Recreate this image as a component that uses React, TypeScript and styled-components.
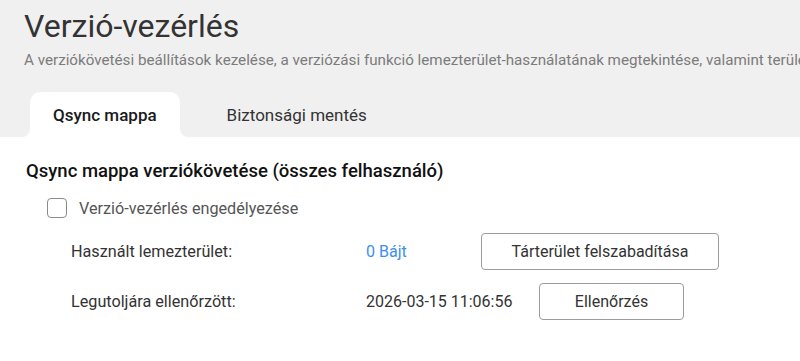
import React from "react";
import styled, { createGlobalStyle } from "styled-components";

const Global = createGlobalStyle`
  html, body { margin: 0; padding: 0; background: #ffffff; }
  body { font-family: Roboto, "Noto Sans", "Liberation Sans", sans-serif; overflow: hidden; }
  * { box-sizing: border-box; }
`;

const Page = styled.div`
  width: 800px;
  height: 361px;
  background: #ffffff;
  overflow: hidden;
`;

const Header = styled.header`
  background: #f0f0f0;
  padding: 6px 0 0 24px;
`;

const Title = styled.h1`
  margin: 0;
  font-size: 32px;
  line-height: 40px;
  font-weight: 400;
  color: #333333;
`;

const Subtitle = styled.p`
  margin: 5px 0 0 0;
  font-size: 15.2px;
  line-height: 18px;
  color: #7b7b7b;
  white-space: nowrap;
  overflow: hidden;
`;

const TabBar = styled.nav`
  display: flex;
  gap: 24px;
  margin-top: 23px;
  padding-left: 6px;
`;

const Tab = styled.div<{ $active?: boolean }>`
  position: relative;
  height: 45px;
  padding: 0 23px;
  display: flex;
  align-items: center;
  font-size: 17px;
  font-weight: ${(p) => (p.$active ? 500 : 400)};
  color: ${(p) => (p.$active ? "#1a1a1a" : "#333333")};
  background: ${(p) => (p.$active ? "#ffffff" : "transparent")};
  border-radius: 10px 10px 0 0;

  ${(p) =>
    p.$active &&
    `
    &::before, &::after {
      content: "";
      position: absolute;
      bottom: 0;
      width: 8px;
      height: 8px;
      background: transparent;
    }
    &::before {
      left: -8px;
      border-bottom-right-radius: 8px;
      box-shadow: 4px 4px 0 4px #ffffff;
    }
    &::after {
      right: -8px;
      border-bottom-left-radius: 8px;
      box-shadow: -4px 4px 0 4px #ffffff;
    }
  `}
`;

const Content = styled.section`
  padding: 22px 0 0 26px;
`;

const SectionTitle = styled.h2`
  margin: 0;
  font-size: 18.5px;
  line-height: 24px;
  font-weight: 500;
  color: #111111;
  white-space: nowrap;
`;

const CheckRow = styled.label`
  display: flex;
  align-items: center;
  gap: 12px;
  height: 24px;
  margin: 13px 0 0 21px;
  font-size: 16.2px;
  color: #555555;
`;

const Box = styled.span`
  width: 20px;
  height: 20px;
  border: 1.5px solid #8a8a8a;
  border-radius: 4px;
  background: #ffffff;
`;

const Rows = styled.div`
  display: flex;
  flex-direction: column;
  gap: 13px;
  margin: 13px 0 0 45px;
`;

const Row = styled.div`
  display: flex;
  align-items: center;
  height: 37px;
  font-size: 16.2px;
  color: #333333;
  white-space: nowrap;
`;

const Label = styled.span`
  width: 295px;
`;

const Value = styled.span<{ $w: number; $blue?: boolean }>`
  width: ${(p) => p.$w}px;
  font-size: 16px;
  color: ${(p) => (p.$blue ? "#3b8ff0" : "#333333")};
`;

const Button = styled.button<{ $w: number }>`
  width: ${(p) => p.$w}px;
  height: 37px;
  border: 1px solid #9c9c9c;
  border-radius: 4px;
  background: #ffffff;
  font-family: inherit;
  font-size: 16px;
  color: #333333;
  padding: 0;
  cursor: pointer;
`;

export default function App() {
  return (
    <Page>
      <Global />
      <Header>
        <Title>Verzió-vezérlés</Title>
        <Subtitle>
          A verziókövetési beállítások kezelése, a verziózási funkció lemezterület-használatának megtekintése, valamint területfelszabadítás.
        </Subtitle>
        <TabBar>
          <Tab $active>Qsync mappa</Tab>
          <Tab>Biztonsági mentés</Tab>
        </TabBar>
      </Header>
      <Content>
        <SectionTitle>Qsync mappa verziókövetése (összes felhasználó)</SectionTitle>
        <CheckRow>
          <Box />
          Verzió-vezérlés engedélyezése
        </CheckRow>
        <Rows>
          <Row>
            <Label>Használt lemezterület:</Label>
            <Value $w={115} $blue>0 Bájt</Value>
            <Button $w={238}>Tárterület felszabadítása</Button>
          </Row>
          <Row>
            <Label>Legutoljára ellenőrzött:</Label>
            <Value $w={173}>2026-03-15 11:06:56</Value>
            <Button $w={145}>Ellenőrzés</Button>
          </Row>
        </Rows>
      </Content>
    </Page>
  );
}
